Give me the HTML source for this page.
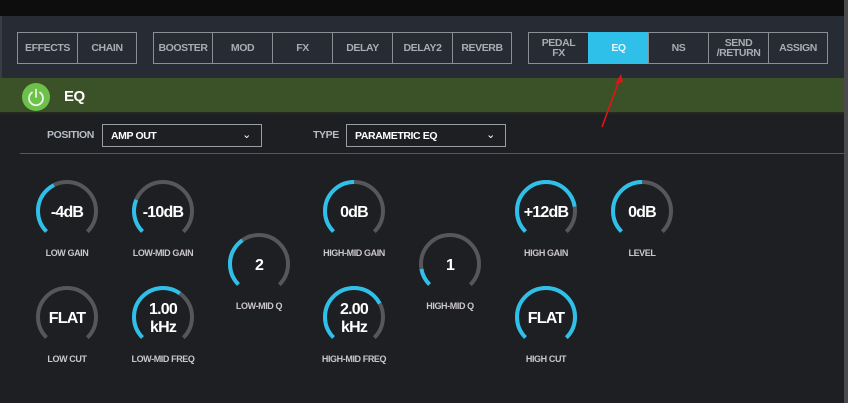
<!DOCTYPE html>
<html><head><meta charset="utf-8"><style>
*{margin:0;padding:0;box-sizing:border-box}
body{width:848px;height:403px;background:#1e1f22;position:relative;overflow:hidden;font-family:"Liberation Sans",sans-serif;font-weight:bold}
.top{position:absolute;left:0;top:0;width:848px;height:16px;background:#0d0d0e}
.nav{position:absolute;left:0;top:16px;width:844px;height:62px;background:#262b34;border-left:2px solid #3a3d44}
.rs{position:absolute;left:844px;top:0;width:4px;height:403px;background:#4a4a4c}
.b{position:absolute;top:32px;height:32px;border:1px solid #8a8e95;color:#a9acb2;font-size:10.5px;letter-spacing:-0.4px;display:flex;align-items:center;justify-content:center;text-align:center;line-height:10px}
.b.on{background:#2fc0ea;color:#e8f7ff;border-color:#2fc0ea}
.green{position:absolute;left:0;top:78px;width:844px;height:36px;background:#3b5229;border-bottom:2px solid #232a20}
.pw{position:absolute;left:22px;top:83px;width:28px;height:28px;border-radius:50%;background:#6dc14a}
.eqt{position:absolute;left:64px;top:88px;color:#fff;font-size:15px;letter-spacing:-0.5px}
.lab{position:absolute;color:#b8bcc4;font-size:10.5px;letter-spacing:-0.4px}
.sel{position:absolute;top:124px;height:23px;border:1px solid #9a9ea4;color:#fff;font-size:10.5px;letter-spacing:-0.4px;padding:5px 8px}
.sel span{position:absolute;right:10px;top:3px;font-weight:normal;font-size:11px}
.sep{position:absolute;left:20px;top:153px;width:824px;height:1px;background:#55585d}
</style></head><body>
<div class="top"></div>
<div class="nav"></div>
<div class="rs"></div>
<div class="b" style="left:17px;width:61px">EFFECTS</div>
<div class="b" style="left:77px;width:60px">CHAIN</div>
<div class="b" style="left:153px;width:60px">BOOSTER</div>
<div class="b" style="left:212px;width:61px">MOD</div>
<div class="b" style="left:272px;width:61px">FX</div>
<div class="b" style="left:332px;width:61px">DELAY</div>
<div class="b" style="left:392px;width:61px">DELAY2</div>
<div class="b" style="left:452px;width:60px">REVERB</div>
<div class="b" style="left:528px;width:61px">PEDAL<br>FX</div>
<div class="b on" style="left:588px;width:61px">EQ</div>
<div class="b" style="left:648px;width:61px">NS</div>
<div class="b" style="left:708px;width:61px">SEND<br>/RETURN</div>
<div class="b" style="left:768px;width:60px">ASSIGN</div>
<div class="green"></div>
<div class="pw"><svg width="28" height="28" viewBox="0 0 28 28"><path d="M10 9.5 A7 7 0 1 0 18 9.5" fill="none" stroke="#e8f5e0" stroke-width="1.8" stroke-linecap="round"/><line x1="14" y1="6.5" x2="14" y2="14" stroke="#e8f5e0" stroke-width="1.8" stroke-linecap="round"/></svg></div>
<div class="eqt">EQ</div>
<div class="lab" style="left:47px;top:129px">POSITION</div>
<div class="sel" style="left:102px;width:160px">AMP OUT<span>&#8964;</span></div>
<div class="lab" style="left:313px;top:129px">TYPE</div>
<div class="sel" style="left:346px;width:160px">PARAMETRIC EQ<span>&#8964;</span></div>
<div class="sep"></div>
<svg style="position:absolute;left:0;top:0" width="848" height="403">
<line x1="602" y1="127" x2="620" y2="78" stroke="#e01515" stroke-width="1.6"/>
<path d="M621 74 L615 84 L623 82 Z" fill="#e01515"/>
</svg>
<svg style="position:absolute;left:0;top:0" width="848" height="403" id="ks"></svg>
<script>
var K=[[67,211,0.4,'-4dB','LOW GAIN'],[163,211,0.25,'-10dB','LOW-MID GAIN'],[259,264,0.37,'2','LOW-MID Q'],[354,211,0.5,'0dB','HIGH-MID GAIN'],[450,264,0.13,'1','HIGH-MID Q'],[546,211,0.8,'+12dB','HIGH GAIN'],[642,211,0.5,'0dB','LEVEL'],[67,317,0.0,'FLAT','LOW CUT'],[163,317,0.63,'1.00|kHz','LOW-MID FREQ'],[354,317,0.73,'2.00|kHz','HIGH-MID FREQ'],[546,317,1.0,'FLAT','HIGH CUT']];
var C=2*Math.PI*29,A=C*0.75,s='';
var F='font-weight="bold" text-anchor="middle" font-family="Liberation Sans, sans-serif"';
K.forEach(function(k){var x=k[0],y=k[1];
s+='<circle cx="'+x+'" cy="'+y+'" r="29" fill="none" stroke="#56575a" stroke-width="4" stroke-dasharray="'+A+' '+C+'" transform="rotate(135 '+x+' '+y+')"/>';
if(k[2]>0)s+='<circle cx="'+x+'" cy="'+y+'" r="29" fill="none" stroke="#2fc0ea" stroke-width="4" stroke-dasharray="'+(A*k[2])+' '+C+'" transform="rotate(135 '+x+' '+y+')"/>';
var t=k[3].split('|');
if(t.length==1)s+='<text x="'+x+'" y="'+(y+6)+'" fill="#fff" font-size="16" letter-spacing="-0.8" '+F+'>'+t[0]+'</text>';
else s+='<text x="'+x+'" y="'+(y-3)+'" fill="#fff" font-size="16" letter-spacing="-0.8" '+F+'>'+t[0]+'</text><text x="'+x+'" y="'+(y+15)+'" fill="#fff" font-size="16" letter-spacing="-0.8" '+F+'>'+t[1]+'</text>';
s+='<text x="'+x+'" y="'+(y+45)+'" fill="#c9c6cc" font-size="9" letter-spacing="-0.4" '+F+'>'+k[4]+'</text>';});
document.getElementById('ks').innerHTML=s;
</script>
</body></html>
